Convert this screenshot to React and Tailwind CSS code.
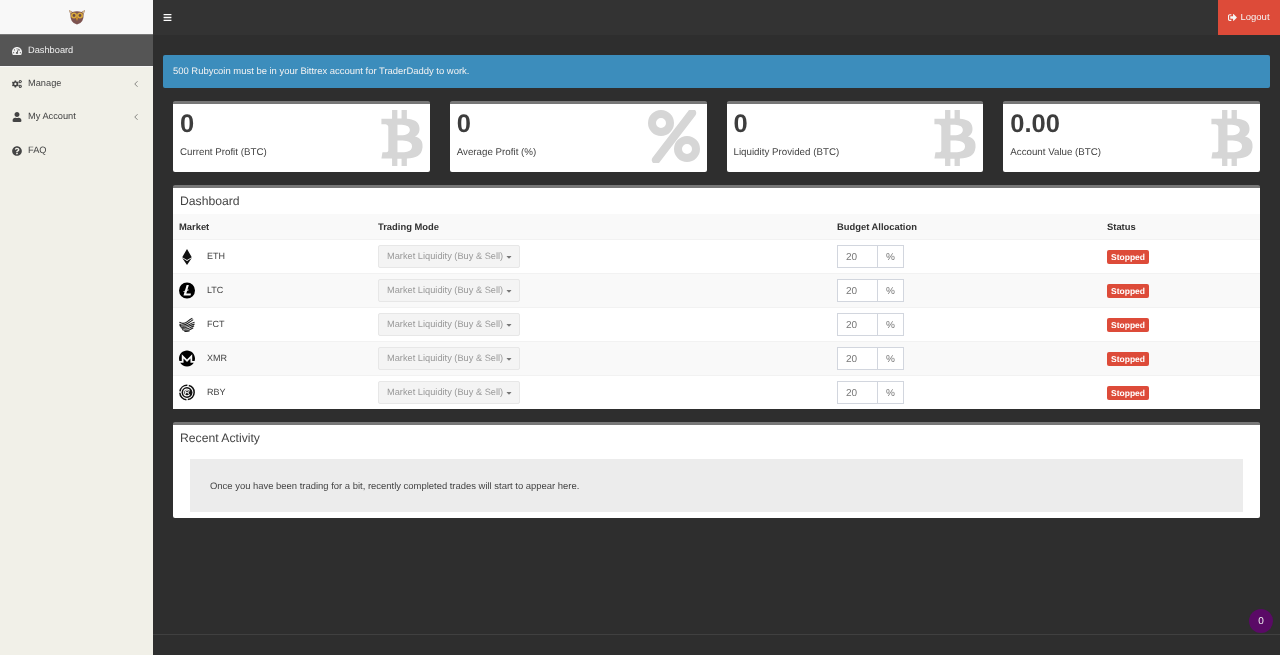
import React from 'react';
import { FaTachometerAlt, FaCogs, FaUser, FaQuestionCircle, FaBars, FaSignOutAlt, FaBtc, FaEthereum, FaCaretDown } from 'react-icons/fa';
import { SiLitecoin, SiMonero } from 'react-icons/si';
import { ChevronLeft } from 'lucide-react';

const OwlLogo = () => (
  <svg width="18" height="18" viewBox="0 0 18 18">
    <path d="M1 2 L4.5 4 Q9 2.5 13.5 4 L17 2 L15.6 6.5 Q16 15 9 16.5 Q2 15 2.4 6.5 Z" fill="#7d5350" />
    <path d="M1 2 L4 4 L2.5 6 Z M17 2 L14 4 L15.5 6 Z" fill="#d9bd8c" />
    <circle cx="6" cy="7.5" r="3" fill="#d9a93c" />
    <circle cx="12" cy="7.5" r="3" fill="#d9a93c" />
    <circle cx="6" cy="7.5" r="1.4" fill="#6d4a46" />
    <circle cx="12" cy="7.5" r="1.4" fill="#6d4a46" />
    <path d="M8 9.5 L10 9.5 L9 13 Z" fill="#eda51e" />
  </svg>
);

const PercentIcon = () => (
  <svg width="52" height="53" viewBox="0 0 52 53" fill="none">
    <circle cx="13" cy="13" r="9" stroke="currentColor" strokeWidth="8" />
    <circle cx="39" cy="39" r="9" stroke="currentColor" strokeWidth="8" />
    <path d="M44 3 L8 50" stroke="currentColor" strokeWidth="8.5" strokeLinecap="round" />
  </svg>
);

const FctIcon = () => (
  <svg width="18" height="16" viewBox="0 0 18 16" fill="none" stroke="#222" strokeWidth="1.2">
    <path d="M0.5 5 Q5 7.5 9 4.5 Q13 1.5 15 0.5" />
    <path d="M0.5 7 Q5 9.5 10 6 Q14 3.5 16 2" />
    <path d="M0.5 8 Q5 11 10.5 8 Q15 5.5 17.5 5" />
    <path d="M1 9.5 Q6 12.5 11 9.5 Q15 7.5 17.5 7" />
    <path d="M2 11 Q7 14 12 11.2 Q15 9.5 17 9" />
    <path d="M3.5 13 Q8 15 12.5 13 Q15 11.5 16 11" />
    <path d="M6 15 Q9 15.6 12 14.5" />
  </svg>
);

const RbyIcon = () => (
  <svg width="17" height="17" viewBox="0 0 17 17" fill="none">
    <circle cx="8.5" cy="8.5" r="7.6" stroke="#111" strokeWidth="1.6" strokeDasharray="11 1.5" />
    <circle cx="8.5" cy="8.5" r="5.8" fill="#111" />
    <path d="M11.4 6.4 Q10.4 4.9 8.5 4.9 Q5 4.9 5 8.5 Q5 12.1 8.5 12.1 Q10.4 12.1 11.4 10.6" stroke="#fff" strokeWidth="1.3" />
    <path d="M7 10.6 V6.6 H9.4 Q10.5 6.6 10.5 7.6 Q10.5 8.6 9.4 8.6 H7 M9.2 8.6 L10.6 10.6" stroke="#fff" strokeWidth="1" />
  </svg>
);

const menu = [
  { label: 'Dashboard', icon: FaTachometerAlt, active: true },
  { label: 'Manage', icon: FaCogs, arrow: true },
  { label: 'My Account', icon: FaUser, arrow: true },
  { label: 'FAQ', icon: FaQuestionCircle },
];

const stats = [
  { value: '0', label: 'Current Profit (BTC)', icon: 'btc' },
  { value: '0', label: 'Average Profit (%)', icon: 'percent' },
  { value: '0', label: 'Liquidity Provided (BTC)', icon: 'btc' },
  { value: '0.00', label: 'Account Value (BTC)', icon: 'btc' },
];

const markets = [
  { name: 'ETH', icon: <FaEthereum size={16} color="#111" /> },
  { name: 'LTC', icon: <SiLitecoin size={17} color="#000" /> },
  { name: 'FCT', icon: <FctIcon /> },
  { name: 'XMR', icon: <SiMonero size={17} color="#000" /> },
  { name: 'RBY', icon: <RbyIcon /> },
];

const StatCard = ({ stat }) => (
  <div className="relative h-[71px] overflow-hidden rounded-[2px] border-t-[3px] border-[#777] bg-white px-[7px]">
    <div className="mt-[5px] text-[25.5px] font-bold leading-[30px] text-[#3d3d3d]">{stat.value}</div>
    <div className="mt-[7px] text-[9.75px] leading-[14px] text-[#444]">{stat.label}</div>
    <div className="absolute top-[6px] right-0 text-[#d6d6d6]">
      {stat.icon === 'btc' ? <FaBtc size={56} /> : <div className="mr-[7px]"><PercentIcon /></div>}
    </div>
  </div>
);

const MarketRow = ({ market, odd }) => (
  <div className={`grid h-[34px] grid-cols-[199px_459px_270px_1fr] items-center border-t border-[#f2f2f2] pl-[6px] pr-[5px] text-[9px] text-[#444] ${odd ? 'bg-[#f9f9f9]' : 'bg-white'}`}>
    <div className="flex items-center">
      <div className="flex w-[16px] justify-center">{market.icon}</div>
      <span className="ml-[12px]">{market.name}</span>
    </div>
    <div>
      <div className="flex h-[23px] w-[142px] items-center rounded-[2px] border border-[#e7e7e7] bg-[#f4f4f4] pl-[8px] pt-[1px] text-[9.25px] text-[#999]">
        Market Liquidity (Buy &amp; Sell)
        <FaCaretDown size={8} className="ml-[2px] text-[#777]" />
      </div>
    </div>
    <div className="flex h-[23px] text-[10px] text-[#777]">
      <div className="flex w-[41px] items-center border border-[#d2d6de] bg-white pl-[8px] pt-[1px]">20</div>
      <div className="flex w-[26px] items-center justify-center border border-l-0 border-[#d2d6de] bg-white pt-[1px]">%</div>
    </div>
    <div>
      <span className="mt-[1px] block h-[14px] w-[42px] rounded-[2px] bg-[#dd4b39] text-center text-[8.5px] font-bold leading-[14px] text-white">Stopped</span>
    </div>
  </div>
);

const App = () => {
  return (
    <div className="flex h-[655px] w-[1280px] overflow-hidden font-['Liberation_Sans',Arial,sans-serif] [text-rendering:geometricPrecision] [will-change:transform]">
      {/* Sidebar */}
      <aside className="w-[153px] shrink-0 bg-[#f1f0e8]">
        <div className="flex h-[34px] items-center justify-center bg-[#f8f8f8]">
          <OwlLogo />
        </div>
        <nav>
          {menu.map((item) => {
            const Icon = item.icon;
            return (
              <div
                key={item.label}
                className={`flex h-[33.3px] items-center pl-[12px] pr-[12px] text-[9.25px] ${
                  item.active ? 'border-b border-t border-[#f8f8f8] border-t-[#777] bg-[#555] text-[#f0f0f0]' : 'text-[#444]'
                }`}
              >
                <span className="flex w-[16px]">
                  <Icon size={10} />
                </span>
                <span>{item.label}</span>
                {item.arrow && <ChevronLeft size={10} strokeWidth={1.5} className="ml-auto text-[#444]" />}
              </div>
            );
          })}
        </nav>
      </aside>

      {/* Main column */}
      <div className="flex min-w-0 flex-1 flex-col bg-[#2e2e2e]">
        <header className="flex h-[35px] shrink-0 items-center justify-between bg-[#333]">
          <button className="pb-[1px] pl-[10px] text-white">
            <FaBars size={9} />
          </button>
          <button className="flex h-[35px] w-[62px] items-center justify-center gap-[3px] bg-[#dd4b39] text-[9.5px] text-[#f5f5f5]">
            <FaSignOutAlt size={9} />
            Logout
          </button>
        </header>

        <main className="flex-1 px-[10px] pt-[20px]">
          <div className="flex h-[33px] items-center rounded-[2px] bg-[#3c8dbc] px-[10px] pt-[1px] text-[9.45px] text-[#f2f2f2]">
            500 Rubycoin must be in your Bittrex account for TraderDaddy to work.
          </div>

          <div className="mx-[10px]">
            <div className="mt-[13px] grid grid-cols-4 gap-x-[20px]">
              {stats.map((stat) => (
                <StatCard key={stat.label} stat={stat} />
              ))}
            </div>

            <section className="mt-[13px] rounded-[2px] border-t-[3px] border-[#777] bg-white">
              <h2 className="flex h-[26px] items-center px-[7px] text-[12.2px] text-[#444]">Dashboard</h2>
              <div className="grid h-[25px] grid-cols-[199px_459px_270px_1fr] items-center bg-[#f9f9f9] pl-[6px] pr-[5px] pt-[2px] text-[9.4px] font-bold text-[#333]">
                <div>Market</div>
                <div>Trading Mode</div>
                <div>Budget Allocation</div>
                <div>Status</div>
              </div>
              {markets.map((market, i) => (
                <MarketRow key={market.name} market={market} odd={i % 2 === 1} />
              ))}
            </section>

            <section className="mt-[13px] rounded-[2px] border-t-[3px] border-[#777] bg-white pb-[6px]">
              <h2 className="flex h-[26px] items-center px-[7px] text-[12.2px] text-[#444]">Recent Activity</h2>
              <div className="mx-[17px] mt-[8px] flex h-[53px] items-center bg-[#ececec] px-[20px] pt-[3px] text-[9.45px] text-[#444]">
                Once you have been trading for a bit, recently completed trades will start to appear here.
              </div>
            </section>
          </div>
        </main>

        <footer className="h-[21px] shrink-0 border-t border-[#404040]" />
      </div>

      {/* Notification bubble */}
      <div className="fixed left-[1249px] top-[609px] flex h-[24px] w-[24px] items-center justify-center rounded-full bg-[#5a0a66] text-[10px] text-[#eee]">
        0
      </div>
    </div>
  );
};

export default App;
